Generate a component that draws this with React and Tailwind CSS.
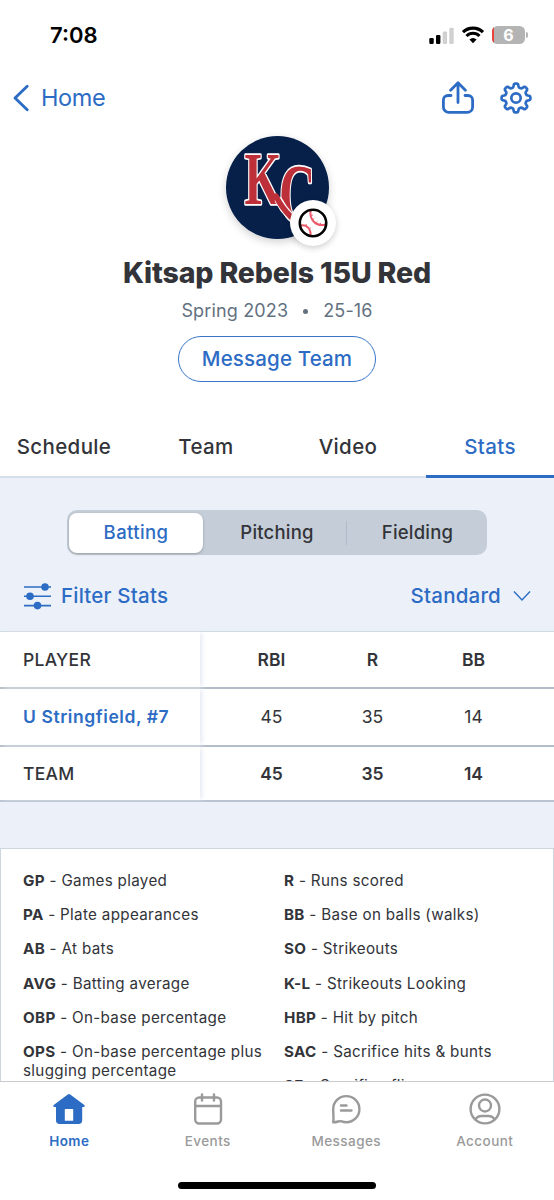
const TABS = ["Schedule", "Team", "Video", "Stats"]

const COLUMNS = ["RBI", "R", "BB"]

const LEGEND_LEFT = [
  ["GP", "Games played"],
  ["PA", "Plate appearances"],
  ["AB", "At bats"],
  ["AVG", "Batting average"],
  ["OBP", "On-base percentage"],
  ["OPS", "On-base percentage plus slugging percentage"],
]

const LEGEND_RIGHT = [
  ["R", "Runs scored"],
  ["BB", "Base on balls (walks)"],
  ["SO", "Strikeouts"],
  ["K-L", "Strikeouts Looking"],
  ["HBP", "Hit by pitch"],
  ["SAC", "Sacrifice hits & bunts"],
  ["SF", "Sacrifice flies"],
]

function gearPath(cx, cy, teeth, outer, inner) {
  const steps = 120
  let d = ""
  for (let i = 0; i < steps; i++) {
    const a = (i / steps) * Math.PI * 2
    const wave = Math.tanh(2.2 * Math.cos(teeth * a)) / Math.tanh(2.2)
    const r = (outer + inner) / 2 + ((outer - inner) / 2) * wave
    const x = cx + r * Math.sin(a)
    const y = cy - r * Math.cos(a)
    d += `${i === 0 ? "M" : "L"}${x.toFixed(2)} ${y.toFixed(2)}`
  }
  return d + "Z"
}

function StatusBar() {
  return (
    <div className="flex h-[70px] items-center justify-between pl-[50px] pr-[26px]">
      <span className="text-[22px] font-semibold leading-none text-black">7:08</span>
      <div className="flex items-center">
        <svg width="25" height="17" viewBox="0 0 25 17" className="mr-[7px]">
          <rect x="0.3" y="11" width="4.4" height="6" rx="1.2" fill="#000" />
          <rect x="7" y="8" width="4.4" height="9" rx="1.2" fill="#000" />
          <rect x="13.7" y="4.5" width="4.4" height="12.5" rx="1.2" fill="#d0d0d0" />
          <rect x="20.3" y="0.8" width="4.4" height="16.2" rx="1.2" fill="#d0d0d0" />
        </svg>
        <svg width="24" height="18" viewBox="0 0 24 18" className="mr-[7px]">
          <path d="M2 6.2A14.4 14.4 0 0 1 22 6.2" fill="none" stroke="#000" strokeWidth="3.2" />
          <path d="M5.5 10A9.2 9.2 0 0 1 18.5 10" fill="none" stroke="#000" strokeWidth="3" />
          <path d="M8.4 13.5Q12 10.4 15.6 13.5L12 17.2Z" fill="#000" />
        </svg>
        <div className="relative flex h-[18px] w-[33px] items-center justify-center overflow-hidden rounded-[5.5px] bg-[#b4b4b4]">
          <span className="absolute inset-y-0 left-0 w-[2px] bg-[#ee4238]" />
          <span className="text-[16px] font-bold leading-none text-white">6</span>
        </div>
        <span className="ml-px h-[6px] w-[2px] rounded-r-full bg-[#b4b4b4]" />
      </div>
    </div>
  )
}

function NavBar() {
  return (
    <div className="flex h-14 items-center justify-between pl-3 pr-[21px] text-[#2d6cc4]">
      <div className="flex items-center">
        <svg width="18" height="28" viewBox="0 0 18 28" fill="none" stroke="currentColor" strokeWidth="2.9" strokeLinecap="round" strokeLinejoin="round">
          <path d="M15.2 2.2 3 14l12.2 11.8" />
        </svg>
        <span className="ml-[11px] text-[23.5px] leading-none tracking-[-0.4px]">Home</span>
      </div>
      <div className="flex items-center gap-6">
        <svg width="34" height="34" viewBox="0 0 34 34" fill="none" stroke="currentColor" strokeWidth="2.8" strokeLinecap="round" strokeLinejoin="round">
          <path d="M10 14.5H7a4.6 4.6 0 0 0-4.6 4.6V26a5.4 5.4 0 0 0 5.4 5.4h18.4A5.4 5.4 0 0 0 31.6 26v-6.9A4.6 4.6 0 0 0 27 14.5h-3" />
          <path d="M17 21.5V2M9.6 9.200 17 1.800l7.400 7.400" />
        </svg>
        <svg width="34" height="34" viewBox="0 0 34 34" fill="none" stroke="currentColor" strokeWidth="2.7" strokeLinejoin="round">
          <path d={gearPath(17, 17, 8, 14.4, 10.8)} />
          <circle cx="17" cy="17" r="4.7" />
        </svg>
      </div>
    </div>
  )
}

function TeamLogo() {
  return (
    <div className="relative h-[103px] w-[103px]">
      <div className="h-full w-full rounded-full bg-[#07204a] shadow-[0_3px_8px_rgba(0,0,0,0.18)]">
        <svg width="103" height="103" viewBox="0 0 103 103" className="overflow-visible">
          <g fontFamily="'Liberation Serif', serif" fontWeight="bold" fill="#bd3039" stroke="#fff" strokeWidth="2.8" paintOrder="stroke" strokeLinejoin="round">
            <text transform="translate(53 87) scale(0.84 1.4)" fontSize="60" strokeWidth="2.4">C</text>
            <text transform="translate(18.5 67.5) scale(0.79 1.25)" fontSize="60">K</text>
          </g>
          {/* swash joining the two letters */}
          <g fill="none" strokeLinecap="round">
            <path d="M53 65Q57 73 64 80" stroke="#fff" strokeWidth="8" />
            <path d="M50 60Q55 71 65 81" stroke="#bd3039" strokeWidth="5.5" />
          </g>
        </svg>
      </div>
      <div className="absolute -bottom-[7px] -right-[7px] flex h-[46px] w-[46px] items-center justify-center rounded-full bg-white shadow-[0_2px_6px_rgba(0,0,0,0.2)]">
        <svg width="30" height="30" viewBox="0 0 30 30" fill="none">
          <g stroke="#ee5a6c" strokeWidth="2">
            <path d="M12.5 2.5C11.5 12 18 19 27.5 16.5" />
            <path d="M3 17.5C8.5 16.5 13 20.5 12.5 27" />
          </g>
          <g stroke="#ee5a6c" strokeWidth="0.9">
            <path d="M12.5 7.5l2.5-.5M14.3 12l2-1.5M18 15.6l1.2-2.1M22.5 17.3v-2.4M7.5 18l.9-1.9M11 21l1.8-1.4" />
          </g>
          <circle cx="15" cy="15" r="13.2" stroke="#000" strokeWidth="2.6" />
        </svg>
      </div>
    </div>
  )
}

function TeamHeader() {
  return (
    <div className="flex h-[292px] flex-col items-center pt-[10px]">
      <TeamLogo />
      <h1 className="mt-[18px] text-[28.5px] font-extrabold leading-[32px] tracking-[-0.15px] text-[#323439]">Kitsap Rebels 15U Red</h1>
      <div className="mt-[9px] flex items-center text-[18px] leading-[26px] tracking-[0.15px] text-[#63717f]">
        <span>Spring 2023</span>
        <span className="mx-[15px] h-[5px] w-[5px] rounded-full bg-[#63717f]" />
        <span>25-16</span>
      </div>
      <button className="mt-3 h-[46px] w-[198px] rounded-full border-[1.5px] border-[#3a75c8] text-[20.5px] font-medium tracking-[0.15px] text-[#2d6cc4]">
        Message Team
      </button>
    </div>
  )
}

function Tabs() {
  return (
    <div className="flex h-[60px] gap-[14px] border-b-2 border-[#d5dfe9] text-[20.5px] font-medium tracking-[0.35px] text-[#323439]">
      {TABS.map(tab => (
        <div
          key={tab}
          className={`flex flex-1 items-center justify-center ${tab === "Stats" ? "-mb-0.5 border-b-[3px] border-[#2d6cc4] pt-px text-[#2d6cc4]" : ""}`}
        >
          {tab}
        </div>
      ))}
    </div>
  )
}

function StatControls() {
  return (
    <div className="h-[153px] px-[23px] pt-8">
      <div className="mx-auto flex h-[45px] w-[420px] items-center rounded-[10px] bg-[#c5ced8] p-[3px] text-[18.5px] font-medium tracking-[0.2px] text-[#323439]">
        <div className="-ml-px flex h-[40px] w-[134px] items-center justify-center rounded-[8px] bg-white tracking-[0.4px] text-[#2d6cc4] shadow-[0_1px_3px_rgba(0,0,0,0.25)]">
          Batting
        </div>
        <div className="flex h-6 flex-1 items-center justify-center border-r border-[#b1bcc8] pl-[5px]">Pitching</div>
        <div className="flex h-6 w-[137px] items-center justify-center pl-1">Fielding</div>
      </div>
      <div className="mt-[27px] flex h-[28px] items-center justify-between text-[20.5px] font-medium tracking-[0.2px] text-[#2d6cc4]">
        <div className="flex items-center gap-[10px]">
          <svg width="28" height="28" viewBox="0 0 28 28" fill="currentColor">
            <path d="M1 5h27M1 14.3h27M1 23.6h27" stroke="currentColor" strokeWidth="1.6" />
            <circle cx="22" cy="5" r="3.8" />
            <circle cx="7" cy="14.3" r="3.8" />
            <circle cx="14.5" cy="23.6" r="3.8" />
          </svg>
          <span className="pt-px">Filter Stats</span>
        </div>
        <div className="flex items-center gap-3">
          <span className="pt-px">Standard</span>
          <svg width="18" height="12" viewBox="0 0 18 12" fill="none" stroke="currentColor" strokeWidth="1.4">
            <path d="M1 1.5 9 10l8-8.5" />
          </svg>
        </div>
      </div>
    </div>
  )
}

function StatsRow({ name, values, className, nameClass, valueClass }) {
  return (
    <div className={`flex items-stretch bg-white text-[17.5px] text-[#323439] ${className}`}>
      <div className={`flex w-[200px] items-center pl-[23px] shadow-[3px_0_5px_-1px_#e6e8f2] ${nameClass}`}>{name}</div>
      <div className={`grid flex-1 grid-cols-[101px_101px_101px] items-center pl-[21px] text-center ${valueClass}`}>
        {values.map((v, i) => (
          <span key={i}>{v}</span>
        ))}
      </div>
    </div>
  )
}

function StatsTable() {
  return (
    <div className="border-t border-[#cfdae2]">
      <StatsRow name="PLAYER" values={COLUMNS} className="h-[57px] border-b-2 border-[#b3bdc9]" nameClass="pt-[2px] font-medium tracking-[0.3px]" valueClass="pt-[2px] font-semibold" />
      <StatsRow name="U Stringfield, #7" values={[45, 35, 14]} className="h-[58px] border-b-2 border-[#b3bdc9]" nameClass="font-semibold tracking-[0.57px] text-[#2d6cc4]" valueClass="" />
      <StatsRow name="TEAM" values={[45, 35, 14]} className="h-[55px] border-b-2 border-[#b8c5d1]" nameClass="pt-px font-medium tracking-[0.3px]" valueClass="pt-px font-semibold" />
    </div>
  )
}

function LegendColumn({ items }) {
  return (
    <div className="flex flex-col gap-[15.2px]">
      {items.map(([abbr, text]) => (
        <p key={abbr}>
          <b className="font-bold">{abbr}</b> - {text}
        </p>
      ))}
    </div>
  )
}

function Legend() {
  return (
    <div className="mt-[46px] grid h-[233px] grid-cols-[261px_1fr] overflow-hidden border-x border-t border-[#cdd6e0] bg-white pl-[22px] pt-[22px] text-[15.2px] leading-[19px] tracking-[0.32px] text-[#323439]">
      <LegendColumn items={LEGEND_LEFT} />
      <LegendColumn items={LEGEND_RIGHT} />
    </div>
  )
}

function NavItem({ label, active, children }) {
  return (
    <div className={`flex flex-1 flex-col items-center text-[13.5px] tracking-[0.45px] ${active ? "font-semibold text-[#2d6cc4]" : "font-medium text-[#9a9a9a]"}`}>
      <svg width="32" height="32" viewBox="0 0 32 32" fill="none" stroke="currentColor" strokeWidth="2.4" strokeLinecap="round" strokeLinejoin="round">
        {children}
      </svg>
      <span className="mt-[6px] leading-5">{label}</span>
    </div>
  )
}

function BottomNav() {
  return (
    <div className="h-[119px] border-t border-[#c9cbce] bg-white">
      <div className="flex h-[100px] pt-[11px]">
        <NavItem label="Home" active>
          <path fill="currentColor" stroke="none" fillRule="evenodd" d="M14.8 1.4a2 2 0 0 1 2.4 0L31 11.7c1.3 1 .6 2.3-.6 2.3h-1.2v13.2a3.800 3.800 0 0 1-3.800 3.800H6.800A3.800 3.800 0 0 1 3 27.200V14H1.600C.4 14-.3 12.700 1 11.700ZM11.800 16.500v11.300h8.400v-11.300a.6.6 0 0 0-.6-.6h-7.200a.6.6 0 0 0-.6.6Z" />
        </NavItem>
        <NavItem label="Events">
          <rect x="3.2" y="4.5" width="25.8" height="26" rx="4" />
          <path d="M3.2 13H29M10 1.5v6M22 1.5v6" />
        </NavItem>
        <NavItem label="Messages">
          <path d="M3.2 29.3C4 26 3.2 22 3.2 16.2A13.1 13.1 0 1 1 16.3 29.3c-1.8 0-3.300-.3-4.700-.9-1.300-.5-2.200-.3-3.400.1-1.500.5-3.200.8-5 .8Z" />
          <path d="M11 12.5h5.5M11 17.5h10.5" />
        </NavItem>
        <NavItem label="Account">
          <circle cx="16" cy="16" r="14.4" />
          <circle cx="16" cy="12.5" r="6" />
          <path d="M6.5 26.5c1.5-2.7 3.5-3.5 6-3.5h7c2.5 0 4.5.8 6 3.5" />
        </NavItem>
      </div>
      <div className="mx-auto h-[7px] w-[198px] rounded-full bg-black" />
    </div>
  )
}

export default function App() {
  return (
    <div className="h-[1200px] w-[554px] overflow-hidden bg-white font-['Inter',sans-serif]">
      <StatusBar />
      <NavBar />
      <TeamHeader />
      <Tabs />
      <div className="bg-[#ebf0f9]">
        <StatControls />
        <StatsTable />
        <Legend />
      </div>
      <BottomNav />
    </div>
  )
}
